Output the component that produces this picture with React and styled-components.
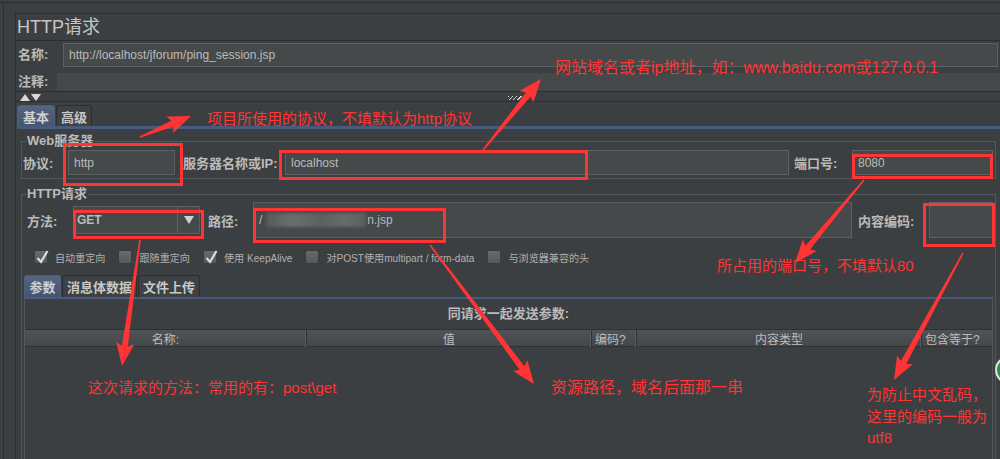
import React from "react";
import styled, { createGlobalStyle } from "styled-components";

const GlobalStyle = createGlobalStyle`
  html, body { margin: 0; padding: 0; background: #3c3f41; }
  * { box-sizing: border-box; }
`;

const UI_FONT = `"Liberation Sans", "Noto Sans CJK SC", sans-serif`;
const LINE = "#2b2d2f";
const RED = "#ff3434";

const Page = styled.div`
  position: relative;
  width: 1000px;
  height: 459px;
  overflow: hidden;
  padding-top: 2px;
  background: #3c3f41;
  color: #bbbbbb;
  font-family: ${UI_FONT};
`;

const Frame = styled.div`
  display: flex;
  height: 100%;
  border-top: 1px solid ${LINE};
`;

const Gutter = styled.div`
  flex: none;
  width: 12px;
  margin-left: 3px;
  border-left: 1px solid ${LINE};
`;

const Main = styled.div`
  flex: 1;
  min-width: 0;
  margin-top: 10px;
  border-top: 1px solid ${LINE};
  border-left: 1px solid ${LINE};
  display: flex;
  flex-direction: column;
`;

const Title = styled.div`
  height: 28px;
  padding-left: 1px;
  font-size: 18px;
  line-height: 26px;
  color: #c6c6c6;
`;

const NamePanel = styled.div`
  border-top: 1px solid ${LINE};
  border-bottom: 1px solid ${LINE};
`;

const NameRow = styled.div`
  display: flex;
  align-items: flex-start;
  height: ${(p) => p.$h}px;
  padding: 2px 0 0 2px;
`;

const FieldLabel = styled.div`
  flex: none;
  width: ${(p) => p.$w}px;
  font-size: 13px;
  font-weight: bold;
  line-height: ${(p) => p.$lh}px;
`;

const TextInput = styled.div`
  flex: ${(p) => (p.$w ? "none" : "1")};
  width: ${(p) => (p.$w ? `${p.$w}px` : "auto")};
  height: ${(p) => p.$h}px;
  min-width: 0;
  display: flex;
  align-items: center;
  padding-left: 5px;
  background: #45494a;
  border: 1px solid #5e6163;
  font-size: 12px;
  color: #bbbbbb;
  white-space: nowrap;
  overflow: hidden;
`;

const NameInput = styled(TextInput)`
  margin-right: 2px;
`;

const CommentBox = styled.div`
  flex: 1;
  height: 18px;
  background: #45494a;
`;

const Splitter = styled.div`
  height: 10px;
  display: flex;
  align-items: center;
  padding: 2px 0 0 4px;
`;

const Grip = styled.span`
  width: 14px;
  height: 4px;
  margin-left: 466px;
  background: repeating-linear-gradient(135deg, #d0d0d0 0 1px, transparent 1px 3px);
`;

const TabArea = styled.div`
  flex: 1;
  border-top: 1px solid ${LINE};
  padding-top: 3px;
`;

const TabStrip = styled.div`
  display: flex;
  gap: 1px;
  height: ${(p) => p.$h}px;
  margin-left: ${(p) => p.$ml}px;
`;

const Tab = styled.div`
  width: ${(p) => p.$w}px;
  display: flex;
  align-items: center;
  justify-content: center;
  font-size: 13px;
  font-weight: bold;
  color: ${(p) => (p.$active ? "#d0d0d0" : "#c8c8c8")};
  background: ${(p) => (p.$active ? "linear-gradient(#55657f, #45556f)" : "#3e4143")};
  border: 1px solid ${(p) => (p.$active ? "#4d5d7c" : "#2b2d2f")};
  border-bottom: none;
  border-radius: 3px 3px 0 0;
`;

const TabLine = styled.div`
  height: ${(p) => p.$h}px;
  margin-left: ${(p) => p.$ml}px;
  background: #4a5a7e;
`;

const Content = styled.div`
  padding: 0 4px 0 5px;
`;

const Group = styled.fieldset`
  margin: ${(p) => p.$mt}px 0 0;
  padding: 0 0 ${(p) => p.$pb || 0}px;
  min-width: 0;
  border: 1px solid #55585a;
`;

const Legend = styled.legend`
  margin-left: 4px;
  padding: 0 1px;
  font-size: 13px;
  font-weight: bold;
  line-height: 14px;
  color: #bbbbbb;
`;

const Row = styled.div`
  display: flex;
  align-items: center;
  height: ${(p) => p.$h}px;
  margin-top: ${(p) => p.$mt}px;
  padding-left: ${(p) => p.$pl}px;
  padding-right: 2px;
`;

const Label = styled.div`
  flex: none;
  width: ${(p) => p.$w}px;
  margin-left: ${(p) => p.$ml || 0}px;
  font-size: 13px;
  font-weight: bold;
  white-space: nowrap;
`;

const Select = styled.div`
  flex: none;
  display: flex;
  width: 127px;
  height: 28px;
  background: #45494a;
  border: 1px solid #5e6163;
  font-size: 12px;
  font-weight: bold;
`;

const SelectValue = styled.div`
  flex: 1;
  display: flex;
  align-items: center;
  padding-left: 3px;
`;

const SelectButton = styled.div`
  width: 22px;
  display: flex;
  align-items: center;
  justify-content: center;
  border-left: 1px solid #5e6163;
`;

const Redacted = styled.span`
  display: inline-block;
  width: 100px;
  height: 14px;
  margin: 0 1px 0 4px;
  background: linear-gradient(90deg, #56595b, #6b6e71 25%, #5d6063 55%, #686b6e 80%, #5a5d60);
  filter: blur(1.5px);
`;

const CheckRow = styled.div`
  display: flex;
  align-items: center;
  gap: 13px;
  height: 14px;
  margin-top: 12px;
  padding-left: 12px;
`;

const CheckItem = styled.div`
  display: flex;
  align-items: center;
  gap: 7px;
  font-size: 10.1px;
  color: #b0b0b0;
  white-space: nowrap;
`;

const Box = styled.span`
  position: relative;
  width: 14px;
  height: 14px;
  border: 1px solid #3a3c3e;
  border-radius: 2px;
  background: linear-gradient(#686a6d, #56585b);
  svg {
    position: absolute;
    left: 0;
    top: -2px;
  }
`;

const ParamTabs = styled.div`
  margin: 11px 2px 0;
`;

const ParamPanel = styled.div`
  margin: 0 2px;
  border-left: 1px solid #55585a;
  border-right: 1px solid #55585a;
  height: 160px;
`;

const PanelHeading = styled.div`
  height: 30px;
  line-height: 30px;
  text-align: center;
  font-size: 13px;
  font-weight: bold;
`;

const TableHead = styled.div`
  display: grid;
  grid-template-columns: 282px 285px 45px 285px 1fr;
  height: 18px;
  background: linear-gradient(#505356, #45484b);
  border-top: 1px solid #2f3133;
  border-bottom: 1px solid #2f3133;
`;

const HeadCell = styled.div`
  display: flex;
  align-items: center;
  justify-content: ${(p) => (p.$left ? "flex-start" : "center")};
  padding-left: ${(p) => (p.$left ? "3px" : "0")};
  font-size: 12px;
  color: #bdbdbd;
  border-right: 1px solid #2f3133;
  box-shadow: inset -1px 0 #5c5f62;
  &:last-child {
    border-right: none;
    box-shadow: none;
  }
`;

const Overlay = styled.div`
  position: absolute;
  inset: 0;
  pointer-events: none;
  svg {
    display: block;
  }
`;

const Note = styled.div`
  position: absolute;
  left: ${(p) => p.$x}px;
  top: ${(p) => p.$y}px;
  font-size: ${(p) => p.$size}px;
  line-height: ${(p) => p.$lh || 20}px;
  color: ${RED};
  white-space: nowrap;
  font-family: ${UI_FONT};
`;

const BOXES = [
  [64.5, 144.5, 117, 40],
  [280.5, 151.5, 306, 27],
  [853.5, 155.5, 138, 22],
  [74.5, 211.5, 128, 26],
  [254.5, 209.5, 190, 32],
  [924.5, 204.5, 69, 41],
];

const ARROWS = [
  [[140, 137], [191, 116]],
  [[483, 150], [541, 79]],
  [[864, 180], [795, 263]],
  [[140, 240], [122, 366]],
  [[430, 245], [534, 384]],
  [[963, 253], [894, 380]],
];

function arrowPoints([x1, y1], [x2, y2]) {
  const dx = x2 - x1;
  const dy = y2 - y1;
  const len = Math.hypot(dx, dy);
  const ux = dx / len;
  const uy = dy / len;
  const nx = -uy;
  const ny = ux;
  const head = 20;
  const bx = x2 - ux * head;
  const by = y2 - uy * head;
  const wx = bx - ux * 3;
  const wy = by - uy * 3;
  const pts = [
    [x1 + nx * 0.8, y1 + ny * 0.8],
    [bx + nx * 3, by + ny * 3],
    [wx + nx * 9, wy + ny * 9],
    [x2, y2],
    [wx - nx * 9, wy - ny * 9],
    [bx - nx * 3, by - ny * 3],
    [x1 - nx * 0.8, y1 - ny * 0.8],
  ];
  return pts.map((p) => p.map((v) => v.toFixed(1)).join(",")).join(" ");
}

function Check({ on }) {
  return (
    <Box>
      {on && (
        <svg width="14" height="16" viewBox="0 0 14 16">
          <path d="M2.5 9 L6 13 L12.5 2" fill="none" stroke="#dcdcdc" strokeWidth="2.2" />
        </svg>
      )}
    </Box>
  );
}

export default function App() {
  return (
    <Page>
      <GlobalStyle />
      <Frame>
        <Gutter />
        <Main>
          <Title>HTTP请求</Title>
          <NamePanel>
            <NameRow $h={30}>
              <FieldLabel $w={45} $lh={24}>名称:</FieldLabel>
              <NameInput $h={24}>http://localhost/jforum/ping_session.jsp</NameInput>
            </NameRow>
            <NameRow $h={20}>
              <FieldLabel $w={39} $lh={18}>注释:</FieldLabel>
              <CommentBox />
            </NameRow>
          </NamePanel>
          <Splitter>
            <svg width="22" height="7" viewBox="0 0 22 7">
              <polygon points="0,7 5,0 10,7" fill="#d8d8d8" />
              <polygon points="11,0 21,0 16,7" fill="#d8d8d8" />
            </svg>
            <Grip />
          </Splitter>
          <TabArea>
            <TabStrip $h={21} $ml={1}>
              <Tab $w={38} $active>基本</Tab>
              <Tab $w={36}>高级</Tab>
            </TabStrip>
            <TabLine $h={3} $ml={1} />
            <Content>
              <Group $mt={5} $pb={3}>
                <Legend>Web服务器</Legend>
                <Row $h={25} $mt={2} $pl={1}>
                  <Label $w={45}>协议:</Label>
                  <TextInput $w={107} $h={25}>http</TextInput>
                  <Label $w={102} $ml={8}>服务器名称或IP:</Label>
                  <TextInput $h={25}>localhost</TextInput>
                  <Label $w={58} $ml={5}>端口号:</Label>
                  <TextInput $w={141} $h={25}>8080</TextInput>
                </Row>
              </Group>
              <Group $mt={8}>
                <Legend>HTTP请求</Legend>
                <Row $h={36} $mt={1} $pl={5}>
                  <Label $w={46}>方法:</Label>
                  <Select>
                    <SelectValue>GET</SelectValue>
                    <SelectButton>
                      <svg width="10" height="8" viewBox="0 0 10 8">
                        <polygon points="0,0 10,0 5,8" fill="#d0d0d0" />
                      </svg>
                    </SelectButton>
                  </Select>
                  <Label $w={45} $ml={8}>路径:</Label>
                  <TextInput $h={36}>
                    /<Redacted />n.jsp
                  </TextInput>
                  <Label $w={71} $ml={6}>内容编码:</Label>
                  <TextInput $w={64} $h={36} />
                </Row>
                <CheckRow>
                  <CheckItem><Check on />自动重定向</CheckItem>
                  <CheckItem><Check />跟随重定向</CheckItem>
                  <CheckItem><Check on />使用 KeepAlive</CheckItem>
                  <CheckItem><Check />对POST使用multipart / form-data</CheckItem>
                  <CheckItem><Check />与浏览器兼容的头</CheckItem>
                </CheckRow>
                <ParamTabs>
                  <TabStrip $h={22} $ml={0}>
                    <Tab $w={37} $active>参数</Tab>
                    <Tab $w={75}>消息体数据</Tab>
                    <Tab $w={62}>文件上传</Tab>
                  </TabStrip>
                  <TabLine $h={2} $ml={0} />
                </ParamTabs>
                <ParamPanel>
                  <PanelHeading>同请求一起发送参数:</PanelHeading>
                  <TableHead>
                    <HeadCell>名称:</HeadCell>
                    <HeadCell>值</HeadCell>
                    <HeadCell $left>编码?</HeadCell>
                    <HeadCell>内容类型</HeadCell>
                    <HeadCell $left>包含等于?</HeadCell>
                  </TableHead>
                </ParamPanel>
              </Group>
            </Content>
          </TabArea>
        </Main>
      </Frame>

      <Overlay>
        <svg width="1000" height="459" viewBox="0 0 1000 459">
          <circle cx="1009" cy="370" r="13" fill="#2f8a4f" stroke="#e0e0e0" strokeWidth="2" />
          {BOXES.map(([x, y, w, h], i) => (
            <rect key={i} x={x} y={y} width={w} height={h} fill="none" stroke={RED} strokeWidth="3" />
          ))}
          {ARROWS.map(([a, b], i) => (
            <polygon key={i} points={arrowPoints(a, b)} fill={RED} />
          ))}
        </svg>
        <Note $x={555} $y={58} $size={16}>网站域名或者ip地址，如：www.baidu.com或127.0.0.1</Note>
        <Note $x={207} $y={109} $size={15}>项目所使用的协议，不填默认为http协议</Note>
        <Note $x={717} $y={256} $size={15}>所占用的端口号，不填默认80</Note>
        <Note $x={88} $y={378} $size={15}>这次请求的方法：常用的有：post\get</Note>
        <Note $x={551} $y={378} $size={16}>资源路径，域名后面那一串</Note>
        <Note $x={867} $y={384} $size={15} $lh={21.5}>
          为防止中文乱码，
          <br />
          这里的编码一般为
          <br />
          utf8
        </Note>
      </Overlay>
    </Page>
  );
}
